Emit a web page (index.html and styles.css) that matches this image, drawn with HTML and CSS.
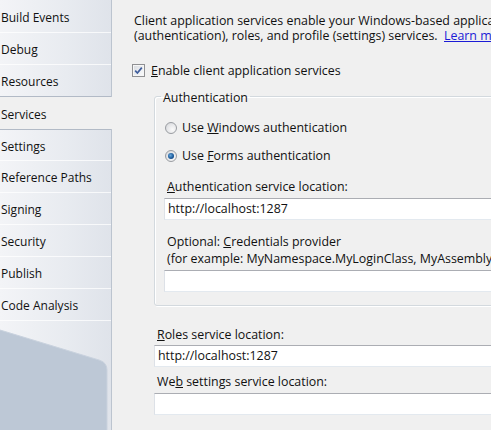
FILE: index.html
```html
<!DOCTYPE html>
<html lang="en">
<head>
    <meta charset="UTF-8">
    <meta name="viewport" content="width=device-width, initial-scale=1.0">
    <title>Services</title>
    <link rel="stylesheet" href="styles.css">
</head>
<body>
    <div class="page">
        <nav class="tabs">
            <div class="tab">Build Events</div>
            <div class="tab">Debug</div>
            <div class="tab tab-before">Resources</div>
            <div class="tab tab-active">Services</div>
            <div class="tab tab-after">Settings</div>
            <div class="tab">Reference Paths</div>
            <div class="tab">Signing</div>
            <div class="tab">Security</div>
            <div class="tab">Publish</div>
            <div class="tab">Code Analysis</div>
            <div class="tabs-foot">
                <svg width="111" height="110" viewBox="0 0 111 110">
                    <path d="M0 9 L99 39 Q107 41.5 107 49 L107 110 L0 110 Z" fill="#bdc8d6"/>
                    <path d="M0 9 L99 39 Q107 41.5 107 49 L107 110" fill="none" stroke="#c9d2de" stroke-width="1"/>
                </svg>
            </div>
        </nav>

        <main class="content">
            <p class="desc">
                Client application services enable your Windows-based applications to use the ASP.NET login<br>
                (authentication), roles, and profile (settings) services.&nbsp; <a class="link" href="#">Learn more</a>
            </p>

            <label class="check-row">
                <span class="checkbox">
                    <svg width="9" height="9" viewBox="0 0 9 9">
                        <path d="M1.2 4.6 L3.4 7 L7.8 1.6" fill="none" stroke="#3f5d9c" stroke-width="1.7"/>
                    </svg>
                </span>
                <span><u>E</u>nable client application services</span>
            </label>

            <div class="form">
                <fieldset class="group">
                    <legend>Authentication</legend>

                    <div class="radio-row">
                        <span class="radio"></span>
                        <span>Use <u>W</u>indows authentication</span>
                    </div>
                    <div class="radio-row second">
                        <span class="radio radio-on"></span>
                        <span>Use <u>F</u>orms authentication</span>
                    </div>

                    <div class="field-label auth"><u>A</u>uthentication service location:</div>
                    <div class="textbox">http://localhost:1287</div>

                    <div class="field-label multi">
                        Optional: <u>C</u>redentials provider<br>
                        (for example: MyNamespace.MyLoginClass, MyAssembly)
                    </div>
                    <div class="textbox tight"></div>
                </fieldset>

                <div class="field-label roles"><u>R</u>oles service location:</div>
                <div class="textbox tight">http://localhost:1287</div>

                <div class="field-label web">We<u>b</u> settings service location:</div>
                <div class="textbox"></div>
            </div>
        </main>
    </div>
</body>
</html>
```

FILE: styles.css
```css
* {
    box-sizing: border-box;
}

html, body {
    margin: 0;
    padding: 0;
    height: 100%;
}

body {
    background-color: #f0f0f0;
    color: #111;
    font-family: "Open Sans", "Noto Sans", sans-serif;
    font-size: 12px;
    line-height: 18px;
    overflow: hidden;
}

.page {
    display: flex;
    height: 100vh;
}

/* Left column of property tabs */
.tabs {
    flex: none;
    width: 112px;
    display: flex;
    flex-direction: column;
    padding-top: 1px;
    background: linear-gradient(to right, #f3f4f7 0%, #e8ebf0 60%, #dfe3ea 100%);
    border-right: 1px solid #bcc4cf;
}

.tab {
    flex: none;
    height: 32px;
    display: flex;
    align-items: center;
    padding: 3px 0 0 1px;
    white-space: nowrap;
    border-bottom: 1px solid rgba(255, 255, 255, 0.75);
}

.tab-before {
    border-bottom-color: #b2bac6;
}

.tab-active {
    background-color: #f0f0f0;
    margin-right: -1px;
    border-bottom: none;
}

.tab-after {
    border-top: 1px solid #b2bac6;
}

.tabs-foot {
    flex: 1;
    overflow: hidden;
}

.tabs-foot svg {
    display: block;
}

/* Page body */
.content {
    flex: none;
    width: 380px;
    padding: 13px 0 0 20px;
    font-size: 12.4px;
}

.desc {
    margin: 0 0 0 2px;
    line-height: 15px;
    white-space: nowrap;
}

.link {
    color: #1b1bd6;
    text-decoration: underline;
}

.check-row {
    display: flex;
    align-items: center;
    height: 18px;
    margin-top: 19px;
    white-space: nowrap;
}

.checkbox {
    flex: none;
    width: 13px;
    height: 13px;
    margin: 0 6px 2px 0;
    display: flex;
    align-items: center;
    justify-content: center;
    border: 1px solid #8f9093;
    background: linear-gradient(135deg, #d6d9de 0%, #eef0f3 60%, #fbfbfc 100%);
    box-shadow: inset 0 0 0 1px #f6f6f6;
}

.checkbox svg {
    display: block;
}

.form {
    margin-left: 22px;
    width: 360px;
}

.group {
    margin: 7px 0 0;
    padding: 14px 0 13px 9px;
    border: 1px solid #d3d9de;
    border-radius: 3px;
    box-shadow: inset 1px 1px 0 #fff, 1px 1px 0 #fff;
    min-width: 0;
}

.group legend {
    padding: 4px 2px 0;
    margin-left: -3px;
    line-height: 14px;
}

.radio-row {
    display: flex;
    align-items: center;
    height: 18px;
    white-space: nowrap;
}

.radio-row.second {
    margin-top: 10px;
}

.radio {
    flex: none;
    width: 12px;
    height: 12px;
    margin: 0 5px 0 1px;
    border-radius: 50%;
    border: 1px solid #9a9da2;
    background: radial-gradient(circle at 65% 65%, #fafafa 0%, #e6e7e9 55%, #cfd1d4 100%);
    display: flex;
    align-items: center;
    justify-content: center;
}

.radio-on::after {
    content: "";
    width: 6px;
    height: 6px;
    border-radius: 50%;
    background: radial-gradient(circle at 40% 40%, #6aa9dd 0%, #1d5c9c 55%, #0c3466 100%);
}

/* Labels sit a little low in their 18px row, like the dialog font */
.field-label {
    padding: 4px 0 0 3px;
    line-height: 14px;
    white-space: nowrap;
}

.field-label.auth {
    margin-top: 11px;
}

.field-label.multi {
    margin-top: 12px;
    padding-top: 1px;
    line-height: 17px;
}

.field-label.roles {
    margin-top: 18px;
}

.field-label.web {
    margin-top: 4px;
}

.textbox {
    height: 22px;
    margin-top: 4px;
    padding: 1px 0 0 3px;
    background-color: #fff;
    border: 1px solid #dde1e7;
    border-top-color: #abadb3;
    border-bottom-color: #e3e9ef;
    white-space: nowrap;
}

.textbox.tight {
    margin-top: 3px;
}
```
